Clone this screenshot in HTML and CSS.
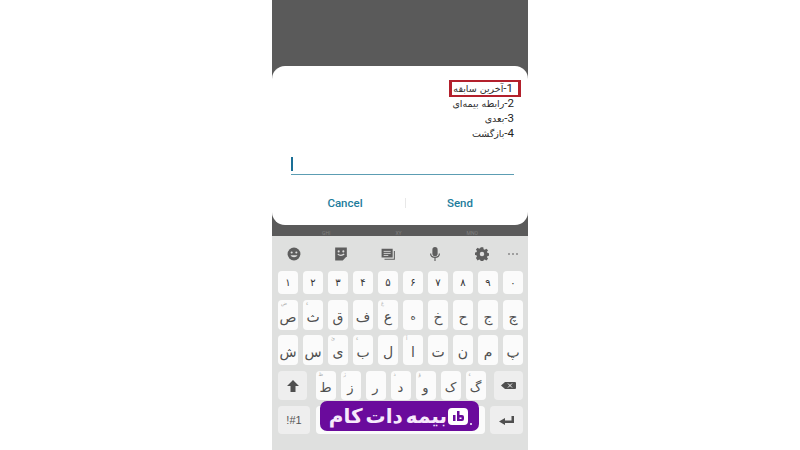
FILE: index.html
```html
<!DOCTYPE html>
<html lang="fa">
<head>
<meta charset="utf-8">
<title>USSD</title>
<link rel="stylesheet" href="styles.css">
</head>
<body>
<main class="phone">
  <section class="overlay">
    <div class="dialog">
      <div class="message" dir="rtl">
        <div class="line"><span class="mark"><span class="num">1-</span>آخرین سابقه</span></div>
        <div class="line"><span class="num">2-</span>رابطه بیمه‌ای</div>
        <div class="line"><span class="num">3-</span>بعدی</div>
        <div class="line"><span class="num">4-</span>بازگشت</div>
      </div>
      <div class="field"><span class="caret"></span></div>
      <div class="actions">
        <span class="action cancel">Cancel</span>
        <span class="divider"></span>
        <span class="action send">Send</span>
      </div>
    </div>
    <div class="behind"><span>GHI</span><span>XY</span><span>MNO</span></div>
  </section>
  <section class="keyboard">
    <div class="toolbar">
      <svg class="tool" viewBox="0 0 24 24"><circle cx="12" cy="12" r="11" fill="#5e5e5e"/><circle cx="8" cy="9.500" r="1.800" fill="#ddd"/><circle cx="16" cy="9.500" r="1.800" fill="#ddd"/><path d="M6 14c2 4.500 10 4.500 12 0z" fill="#ddd"/></svg>
      <svg class="tool" viewBox="0 0 24 24"><path d="M2 1h20v15l-7 7H2z" fill="#5e5e5e"/><circle cx="8" cy="7.500" r="1.800" fill="#ddd"/><circle cx="16" cy="7.500" r="1.800" fill="#ddd"/><path d="M6.500 12c2.500 3 8 3 11 0" fill="none" stroke="#ddd" stroke-width="2"/></svg>
      <svg class="tool" viewBox="0 0 24 24"><path d="M1 3h19v15H1z" fill="#5e5e5e"/><path d="M4.500 7.500h12M4.500 11h12M4.500 14.500h8" stroke="#ddd" stroke-width="1.500"/><path d="M22 7h1.800v15H6v-1.800h16z" fill="#5e5e5e"/></svg>
      <svg class="tool" viewBox="0 0 24 24"><rect x="7.500" y="0" width="9" height="16" rx="4.500" fill="#5e5e5e"/><path d="M4.500 11c0 9 15 9 15 0" fill="none" stroke="#5e5e5e" stroke-width="2"/><path d="M12 18v6" stroke="#5e5e5e" stroke-width="2"/></svg>
      <svg class="tool" viewBox="0 0 24 24"><path d="M9.500 0h5l.7 3.500 2.300 1 3-2 3.300 3.300-2 3 1 2.300 3.200.7v4.400l-3.200.7-1 2.300 2 3-3.300 3.300-3-2-2.300 1-.7 3.500h-5l-.7-3.500-2.300-1-3 2L.2 20.700l2-3-1-2.300L-2 14.700v-4.400l3.200-.7 1-2.300-2-3L3.500 1l3 1.500 2.300-1z" transform="translate(1.400 .6) scale(.88)" fill="#5e5e5e"/><circle cx="12" cy="12" r="3.800" fill="#ddd"/></svg>
      <span class="more"><i></i><i></i><i></i></span>
    </div>
    <div class="keys">
      <div class="row row-num">
        <span class="key">۱</span><span class="key">۲</span><span class="key">۳</span><span class="key">۴</span><span class="key">۵</span><span class="key">۶</span><span class="key">۷</span><span class="key">۸</span><span class="key">۹</span><span class="key">۰</span>
      </div>
      <div class="row row-a">
        <span class="key"><i class="hint">ض</i>ص</span><span class="key"><i class="hint">ء</i>ث</span><span class="key">ق</span><span class="key">ف</span><span class="key"><i class="hint">غ</i>ع</span><span class="key small">ه</span><span class="key">خ</span><span class="key">ح</span><span class="key">ج</span><span class="key">چ</span>
      </div>
      <div class="row row-a">
        <span class="key">ش</span><span class="key">س</span><span class="key"><i class="hint">ئ</i>ی</span><span class="key"><i class="hint">ء</i>ب</span><span class="key">ل</span><span class="key"><i class="hint">آ</i>ا</span><span class="key">ت</span><span class="key">ن</span><span class="key">م</span><span class="key">پ</span>
      </div>
      <div class="row row-b">
        <span class="key fn shift"><svg viewBox="0 0 12 12" class="glyph-shift"><path d="M6 0l6 6H8.500v6h-5V6H0z" fill="#4f4f4f"/></svg></span>
        <span class="letters"><span class="key"><i class="hint">ظ</i>ط</span><span class="key"><i class="hint">ژ</i>ز</span><span class="key">ر</span><span class="key"><i class="hint">ذ</i>د</span><span class="key"><i class="hint">ؤ</i>و</span><span class="key">ک</span><span class="key"><i class="hint">ء</i>گ</span></span>
        <span class="key fn back"><svg viewBox="0 0 15 7" class="glyph-back"><path d="M4 0h10a1 1 0 0 1 1 1v5a1 1 0 0 1-1 1H4L0 3.500z" fill="#4f4f4f"/><path d="M7 1.500l4 4M11 1.500l-4 4" stroke="#eee" stroke-width="1"/></svg></span>
      </div>
      <div class="row row-c">
        <span class="key fn sym">!#1</span>
        <span class="key space"></span>
        <span class="key fn enter"><svg viewBox="0 0 15 9" class="glyph-enter"><path d="M12.500 0H15v7H6v2L0 5.500 6 2v2.500h6.500z" fill="#4f4f4f"/></svg></span>
      </div>
    </div>
    <div class="badge" dir="rtl">
      <span class="logo-wrap">
        <svg class="logo" viewBox="0 0 20 17"><rect width="20" height="17" rx="4" fill="#fff"/><path d="M5 7h2.500V13H5zM9 3h2.500v4H14a2 2 0 0 1 2 2v2a2 2 0 0 1-2 2H9zm2.500 6.500V11H13.500V9.500z" fill="#6a0b9c"/></svg>
        <i class="logo-dot"></i>
      </span>
      <span class="brand">بیمه دات کام</span>
    </div>
  </section>
</main>
</body>
</html>
```

FILE: styles.css
```css
* { box-sizing: border-box; }
html, body { margin: 0; height: 100%; background: #fff; }
body { display: flex; justify-content: center; font-family: "DejaVu Sans", "Noto Sans", sans-serif; overflow: hidden; }
i { font-style: normal; }
.phone { width: 256px; height: 450px; display: flex; flex-direction: column; background: #dfe0df; }
.overlay { height: 236px; background: #5a5a5a; padding-top: 66px; }
.dialog { height: 159px; background: #fff; border-radius: 13px; padding: 15px 14px 0 19px; display: flex; flex-direction: column; }
.message { font-size: 9.500px; line-height: 15px; color: #2e2e2e; height: 62px; white-space: nowrap; }
.line { height: 15px; }
.num { font-family: "Roboto", sans-serif; font-size: 11.500px; color: #222; }
.mark { display: inline-block; height: 17px; margin: -1px -7px 0 0; padding: 0 5px 0 1px; border: 2.500px solid #b3202c; border-width: 2.500px 3px; line-height: 12px; }
.field { height: 32px; border-bottom: 1px solid #5c9db3; display: flex; align-items: flex-end; padding-bottom: 3px; }
.caret { width: 1.500px; height: 14px; background: #1a6f96; }
.actions { flex: 1; display: flex; align-items: center; padding-top: 5px; }
.action { text-align: center; font-family: "Roboto", sans-serif; font-weight: 500; font-size: 11.500px; color: #1d7c9c; }
.cancel { flex: 0 0 114px; padding-right: 6px; }
.send { flex: 1; }
.divider { width: 1px; height: 10px; background: #e8e8e8; }
.behind { height: 11px; display: flex; justify-content: space-between; padding: 5px 50px 0; font-family: "Roboto", sans-serif; font-size: 5px; line-height: 6px; color: #808080; }
.keyboard { flex: 1; position: relative; padding: 0 5px 0 6px; }
.toolbar { height: 35px; display: flex; align-items: center; gap: 33px; padding-left: 9px; }
.tool { width: 14px; height: 14px; display: block; flex: none; }
.more { display: flex; gap: 2px; margin-left: -14px; }
.more i { width: 2px; height: 2px; border-radius: 50%; background: #8a8a8a; }
.keys { display: flex; flex-direction: column; gap: 5px; }
.row { display: flex; gap: 5px; }
.key { position: relative; width: 20px; background: #fbfbfb; border-radius: 4px; display: flex; align-items: center; justify-content: center; color: #505050; font-size: 14px; line-height: 1; flex: none; }
.hint { position: absolute; left: 3px; top: 1px; font-size: 5px; color: #aaa; }
.small { font-size: 10px; }
.row-num { height: 23px; }
.row-num .key { font-size: 10px; color: #333; }
.row-a { height: 30px; margin-top: 1px; }
.row-a + .row-a { margin-top: 0; }
.row-a .key { padding-top: 3px; }
.row-b { height: 29px; justify-content: space-between; margin-top: 1px; }
.row-b .letters .key { padding-top: 4px; font-size: 13px; }
.row-c { height: 28px; margin-top: 1px; }
.letters { display: flex; gap: 5px; }
.fn { background: #eeeeee; }
.shift { width: 29px; }
.back { width: 29px; }
.sym { width: 32px; font-family: "Liberation Sans", sans-serif; font-size: 11px; color: #555; margin-right: 1px; }
.space { width: 169px; }
.enter { width: 33px; }
.glyph-shift { width: 12px; height: 12px; display: block; }
.glyph-back { width: 15px; height: 7px; display: block; }
.glyph-enter { width: 15px; height: 9px; display: block; }
.badge { position: absolute; left: 48px; top: 165px; width: 159px; height: 30px; background: #6a0b9c; border-radius: 7px; display: flex; align-items: center; justify-content: flex-start; gap: 1px; padding: 0 7px 0 0; color: #f6e9fb; }
.brand { font-size: 20px; font-weight: bold; word-spacing: -4px; white-space: nowrap; line-height: 1; }
.logo-wrap { display: flex; align-items: flex-end; flex-direction: row-reverse; gap: 2px; }
.logo { width: 20px; height: 17px; display: block; }
.logo-dot { width: 2px; height: 2px; background: #fff; border-radius: 50%; }
```
